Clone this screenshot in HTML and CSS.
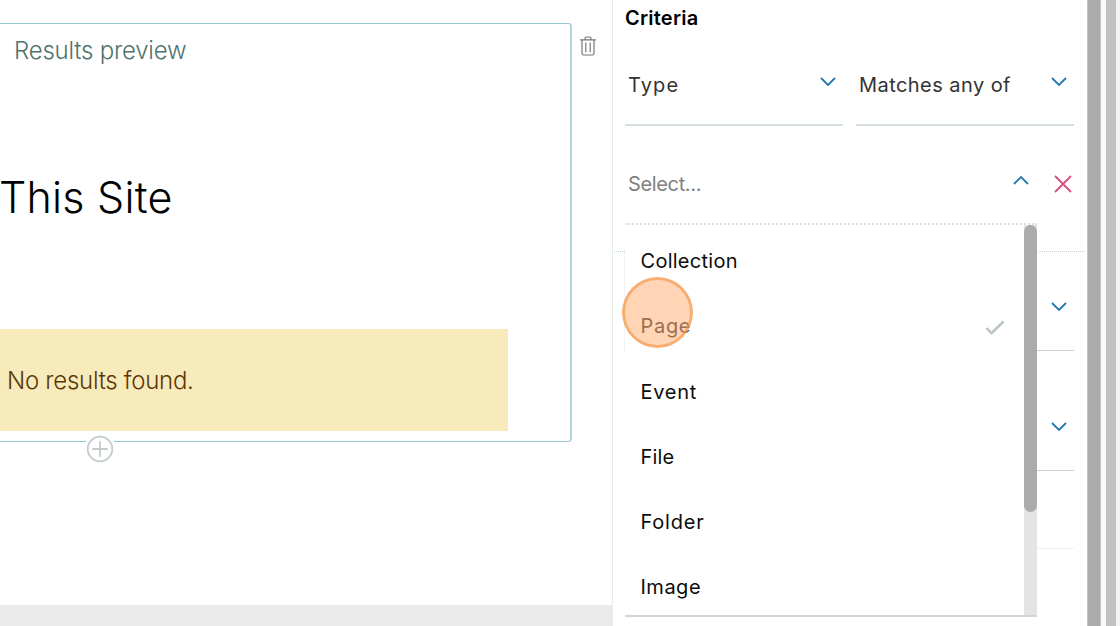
FILE: index.html
```html
<!DOCTYPE html>
<html lang="en">
<head>
<meta charset="utf-8">
<title>Listing editor</title>
<link rel="stylesheet" href="styles.css">
</head>
<body>
<div class="app">
  <main class="canvas">
    <div class="block-row">
      <section class="block">
        <p class="block-label"><span class="t-results">Results preview</span></p>
        <h1 class="block-title"><span class="t-site">This Site</span></h1>
        <div class="notice"><span class="t-none">No results found.</span></div>
        <button class="add" aria-label="Add block"><svg width="28" height="28" viewBox="0 0 28 28"><circle cx="14" cy="14" r="12.3"/><path d="M14 6.2v15.6M6.2 14h15.6"/></svg></button>
      </section>
      <svg class="trash" width="18" height="22" viewBox="0 0 18 22"><path d="M1.2 4.8h15.6M3 5v13.3q0 1.7 1.7 1.7h8.6q1.7 0 1.7-1.7V5M6.1 4.6V3.3Q6.1 2 7.4 2h3.2q1.3 0 1.3 1.3v1.3M6.8 7.6v9.6M11.2 7.6v9.6"/></svg>
    </div>
    <div class="canvas-foot"></div>
  </main>
  <aside class="panel">
    <h2 class="heading"><span class="t-criteria">Criteria</span></h2>
    <div class="pair">
      <div class="field"><span class="t-type">Type</span><svg class="chev" width="16" height="10" viewBox="0 0 16 10"><path d="M1 1l7 7 7-7"/></svg></div>
      <div class="field"><span class="t-match">Matches any of</span><svg class="chev" width="16" height="10" viewBox="0 0 16 10"><path d="M1 1l7 7 7-7"/></svg></div>
    </div>
    <div class="value-row">
      <div class="combo">
        <span class="placeholder">Select...</span>
        <svg class="chev" width="16" height="10" viewBox="0 0 16 10"><path d="M1 9l7-7 7 7"/></svg>
        <div class="menu">
          <ul class="options">
            <li><span class="t-coll">Collection</span></li>
            <li class="chosen"><span class="t-page">Page</span><svg class="check" width="20" height="15" viewBox="0 0 20 15"><path d="M1.5 8l5 5.2L18.5 1.5"/></svg></li>
            <li><span class="t-event">Event</span></li>
            <li><span class="t-file">File</span></li>
            <li><span class="t-folder">Folder</span></li>
            <li><span class="t-image">Image</span></li>
          </ul>
          <div class="track"><div class="thumb"></div></div>
        </div>
        <div class="click-mark"></div>
      </div>
      <svg class="remove" width="20" height="20" viewBox="0 0 20 20"><path d="M2 2l16 16M18 2L2 18"/></svg>
    </div>
    <div class="rest">
      <div class="field sort"><svg class="chev" width="16" height="10" viewBox="0 0 16 10"><path d="M1 1l7 7 7-7"/></svg></div>
      <div class="field order"><svg class="chev" width="16" height="10" viewBox="0 0 16 10"><path d="M1 1l7 7 7-7"/></svg></div>
      <div class="field plain"></div>
    </div>
  </aside>
  <div class="bar-panel"></div>
  <div class="bar-page"></div>
</div>
</body>
</html>
```
FILE: styles.css
```css
* { box-sizing: border-box; }
body { margin: 0; background: #fff; font-family: Inter, "Liberation Sans", sans-serif; color: #0c0c0c; }
.app { display: flex; width: 1120px; height: 626px; overflow: hidden; }
svg { display: block; fill: none; flex: none; }
span { white-space: nowrap; }

.canvas { width: 612px; flex: none; display: flex; flex-direction: column; padding-top: 23px; }
.block-row { display: flex; flex: 1; align-items: flex-start; }
.block { position: relative; width: 572px; height: 419px; border: 1px solid #93c5d2; border-right: 2px solid #b3d5dd; border-left: 0; border-radius: 0 4px 4px 0; display: flex; flex-direction: column; }
.block-label { margin: 12px 0 0 14px; font-size: 24px; line-height: 30px; font-weight: 300; color: #4f726c; }
.block-title { margin: 101px 0 0 -1px; font-size: 43px; line-height: 60px; font-weight: 300; color: #000; }
.notice { margin-top: 102px; width: 508px; height: 102px; padding-left: 7px; display: flex; align-items: center; background: #f7ebbb; color: #5a3605; font-size: 24px; font-weight: 300; }
.add { position: absolute; left: 86px; top: 410px; width: 28px; height: 30px; padding: 1px 0; border: 0; background: #fff; }
.add svg { stroke: #c3cccc; stroke-width: 1.8; }
.trash { margin: 12px 0 0 7px; stroke: #777; stroke-width: 1.2; }
.canvas-foot { height: 21px; background: #eaeaea; }

.t-results { letter-spacing: -.22px; }
.t-site { letter-spacing: .22px; }
.t-none { letter-spacing: -.28px; }
.t-criteria { letter-spacing: .22px; }
.t-type { letter-spacing: 1.1px; }
.t-match { letter-spacing: .44px; }
.t-coll { letter-spacing: .27px; }
.t-page { letter-spacing: .7px; }
.t-event { letter-spacing: .7px; }
.t-file { letter-spacing: .2px; }
.t-folder { letter-spacing: .8px; }
.t-image { letter-spacing: .5px; }

.panel { width: 475px; flex: none; border-left: 1px solid #e6eded; padding-left: 12px; font-size: 20px; }
.heading { margin: 0; height: 44px; padding-top: 3px; font-size: 20px; line-height: 31px; font-weight: 600; color: #000; }
.pair { display: flex; gap: 13px; }
.field { width: 218px; height: 82px; border-bottom: 2px solid #d6dfdf; padding: 2px 7px 0 3px; display: flex; align-items: center; justify-content: space-between; color: #333; }
.chev { stroke: #2479b3; stroke-width: 1.8; }
.field .chev { margin-bottom: 7px; }
.value-row { display: flex; align-items: center; height: 99px; }
.combo { position: relative; width: 412px; height: 99px; border-bottom: 2px dotted #e0e0e3; padding: 18px 8px 0 3px; display: flex; align-items: center; justify-content: space-between; }
.combo .chev { margin-bottom: 8px; }
.placeholder { color: #808080; letter-spacing: -.35px; }
.remove { margin: 17px 0 0 15.5px; stroke: #dc4c82; stroke-width: 1.8; }

.menu { position: absolute; z-index: 1; left: 0; top: 99px; width: 412px; height: 392px; display: flex; background: #fff; border-bottom: 2px solid #cdd7d8; }
.options { flex: 1; margin: 0; padding: 3.5px 0 0 15.5px; list-style: none; }
.options li { height: 65.25px; display: flex; align-items: center; justify-content: space-between; padding-right: 19px; }
.options .chosen { color: #555; }
.check { margin-top: 2px; stroke: #b9c4c7; stroke-width: 2.5; }
.track { width: 13px; background: #e4e4e4; }
.thumb { height: 287px; border-radius: 7px; background: #ababab; }
.click-mark { position: absolute; z-index: 2; left: -3px; top: 151px; width: 71px; height: 71px; border-radius: 50%; border: 3px solid rgba(243, 149, 71, .6); background: rgba(255, 149, 72, .4); }

.rest { margin: 26px 2px 0 -11px; padding-left: 10px; border-top: 1px dotted #c5d2d3; }
.rest .field { width: 450px; height: 99px; padding-right: 7px; border-bottom-width: 1px; border-left: 2px solid #f1f4f4; justify-content: flex-end; }
.rest .sort { padding-top: 18px; border-bottom-color: #c8d4d4; }
.rest .order { height: 120px; padding-top: 39px; border-left-color: transparent; border-bottom-color: #c8d4d4; }
.rest .plain { height: 78px; border-bottom-color: #edf1f1; border-left-color: transparent; }

.bar-panel { width: 14px; flex: none; background: #ababab; border-left: 1px solid #c4c4c4; border-right: 1px solid #c4c4c4; }
.bar-page { flex: 1; background: #c1c1c1; border-left: 5px solid #f9f9f9; border-right: 4px solid #f3f3f3; }
```
